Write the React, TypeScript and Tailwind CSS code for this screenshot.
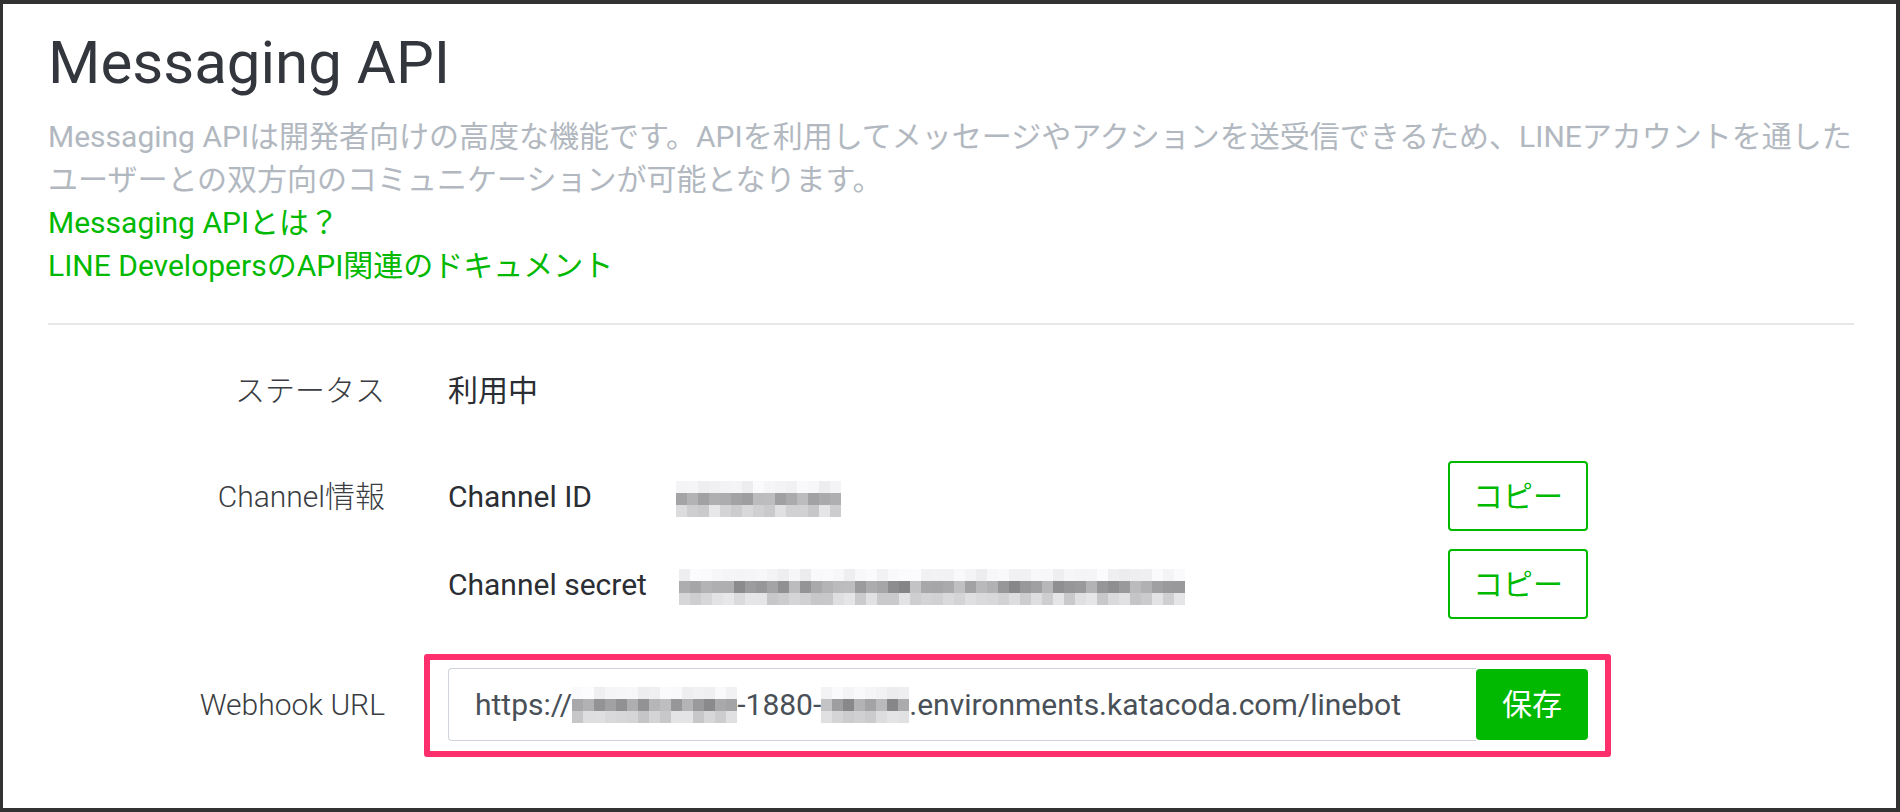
import React from 'react';

// pixelated block standing in for a blurred secret value
function Mosaic({ cols, seed, dark = false }: { cols: number; seed: number; dark?: boolean }) {
  let s = seed;
  const rnd = () => {
    s = (s * 9301 + 49297) % 233280;
    return s / 233280;
  };
  const rows: [number, number][] = [
    [236, 252],
    dark ? [128, 196] : [156, 190],
    [196, 232],
  ];
  return (
    <span className="inline-flex flex-col align-middle">
      {rows.map(([lo, hi], r) => (
        <span key={r} className="flex">
          {Array.from({ length: cols }).map((_, c) => {
            const g = Math.round(lo + rnd() * (hi - lo));
            return (
              <span
                key={c}
                className="block h-[12px] w-[11px]"
                style={{ backgroundColor: `rgb(${g},${g},${Math.min(255, g + 3)})` }}
              />
            );
          })}
        </span>
      ))}
    </span>
  );
}

function CopyButton() {
  return (
    <button className="flex h-[70px] w-[140px] shrink-0 items-center justify-center rounded-[4px] border-2 border-[#00b900] bg-white text-[30px] text-[#00b900]">
      コピー
    </button>
  );
}

export default function App() {
  return (
    <div className="h-[812px] w-full bg-[#323232] pb-[4px] pl-[3px] pr-[4px] pt-[4px] font-['Roboto','Noto_Sans_CJK_JP',sans-serif]">
      <div className="h-full overflow-hidden bg-white pl-[45px] pr-[42px] pt-[23px]">
        <h1 className="text-[60px] leading-[72px] text-[#33373d]">Messaging API</h1>
        <p className="mt-4 text-[30px] leading-[43px] text-[#b2b8bf]">
          Messaging APIは開発者向けの高度な機能です。APIを利用してメッセージやアクションを送受信できるため、LINEアカウントを通した
          <br />
          ユーザーとの双方向のコミュニケーションが可能となります。
        </p>
        <a className="block text-[30px] leading-[43px] text-[#00b900]">Messaging APIとは？</a>
        <a className="block text-[30px] leading-[43px] text-[#00b900]">LINE DevelopersのAPI関連のドキュメント</a>

        <div className="mt-[36px] h-[2px] bg-[#e7e7e7]" />

        {/* status */}
        <div className="mt-[44px] flex h-[43px] items-center text-[30px]">
          <div className="w-[337px] shrink-0 text-right font-light text-[#3a3d42]">ステータス</div>
          <div className="ml-[63px] text-[#2b2e33]">利用中</div>
        </div>

        {/* channel info */}
        <div className="mt-[49px] flex text-[30px]">
          <div className="flex h-[70px] w-[337px] shrink-0 items-center justify-end font-light text-[#3a3d42]">
            Channel情報
          </div>
          <div className="ml-[63px] flex w-[1140px] flex-col gap-[18px]">
            <div className="flex h-[70px] items-center">
              <div className="w-[228px] shrink-0 text-[#2b2e33]">Channel ID</div>
              <div className="flex-1">
                <Mosaic cols={15} seed={7} />
              </div>
              <CopyButton />
            </div>
            <div className="flex h-[70px] items-center">
              <div className="w-[231px] shrink-0 text-[#2b2e33]">Channel secret</div>
              <div className="flex-1">
                <Mosaic cols={46} seed={23} dark />
              </div>
              <CopyButton />
            </div>
          </div>
        </div>

        {/* webhook */}
        <div className="mt-[49px] flex text-[30px]">
          <div className="flex h-[73px] w-[337px] shrink-0 items-center justify-end font-light text-[#3a3d42]">
            Webhook URL
          </div>
          <div className="relative ml-[63px] flex h-[73px] w-[1140px]">
            <div className="flex flex-1 items-center whitespace-nowrap rounded-l-[4px] border border-r-0 border-[#ced4da] pl-[26px] text-[#495057]">
              https://
              <Mosaic cols={15} seed={41} dark />
              -1880-
              <Mosaic cols={8} seed={5} dark />
              .environments.katacoda.com/linebot
            </div>
            <button className="flex h-[71px] w-[112px] shrink-0 items-center justify-center self-center rounded-[4px] bg-[#00b900] text-white">
              保存
            </button>
            <div className="pointer-events-none absolute -bottom-[16px] -left-[24px] -right-[23px] -top-[14px] rounded-[3px] border-[6px] border-[#ff2f6e]" />
          </div>
        </div>
      </div>
    </div>
  );
}
